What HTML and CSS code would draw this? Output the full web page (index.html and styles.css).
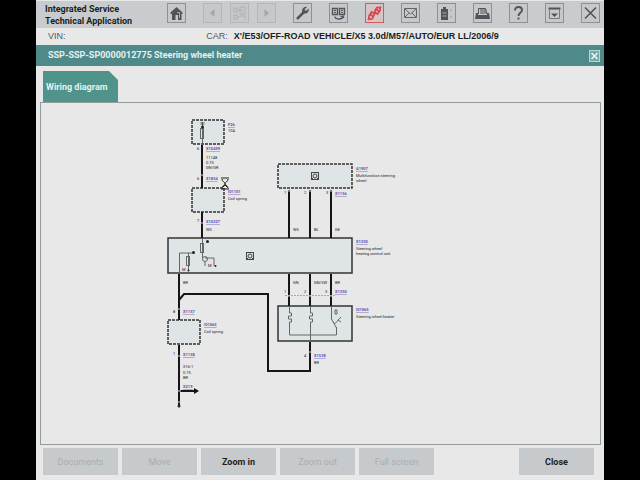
FILE: index.html
```html
<!DOCTYPE html>
<html lang="en">
<head>
<meta charset="utf-8">
<title>Integrated Service Technical Application</title>
<link rel="stylesheet" href="styles.css">
</head>
<body>
<div class="app">
  <header class="topbar">
    <h1 class="brand">Integrated Service<br>Technical Application</h1>
    <nav class="tools" aria-label="Tools">
      <button class="tool" aria-label="Home"><svg viewBox="0 0 17 18"><path d="M2.500 8.500 8.500 3l6 5.500V10H13.500v6H10v-5H7.500v5H4v-6H2.500Z" fill="#505458"/><path d="M9 8.500h3M11.500 9v5" fill="none" stroke="#a9adb0"/></svg></button>
      <div class="history">
        <button class="tool" disabled aria-label="Back"><svg viewBox="0 0 17 18"><path d="M10.500 5v8L6 9z" fill="#a4a8ab"/></svg></button>
        <button class="tool" disabled aria-label="Overview"><svg viewBox="0 0 17 18"><path d="M3 4h3v4H3zM9 3h5v7H9zM9 12h5v3M3 11h3v4H3zM6 6h3M6 13h3M11 5v3" fill="none" stroke="#adb1b4"/></svg></button>
        <button class="tool" disabled aria-label="Forward"><svg viewBox="0 0 17 18"><path d="M6.500 5v8L11 9z" fill="#a4a8ab"/></svg></button>
      </div>
      <button class="tool" aria-label="Settings"><svg viewBox="0 0 17 18"><path d="m3 15 7-7" stroke="#505458" stroke-width="2.500"/><path d="M13 3 10.500 5.500 12 7l2.500-2.500c1 3-1.500 5.500-4 5L8 7.500C8 4.500 10 2 13 3Z" fill="#505458"/></svg></button>
      <button class="tool" aria-label="Vehicle connection"><svg viewBox="0 0 17 18"><path d="M2.500 4.500h5v6h-5zM9.500 4.500h5v6h-5z" fill="#bfc3c6" stroke="#505458" stroke-width="1.300"/><path d="M4 6.500h2M4 8.500h2M11 6.500h2M11 8.500h2" stroke="#505458"/><path d="M5 12.500c0 3 7 3.500 8 .5m-2.500 0 2.500-1 1 2" fill="none" stroke="#505458" stroke-width="1.300"/></svg></button>
      <button class="tool alert" aria-label="Disconnected"><svg viewBox="0 0 17 18" fill="none" stroke="#d8484a" stroke-width="1.700"><path d="m8.500 8 2-4c1.500-1.500 4.500 0 3.500 2.500L11.500 10zM8.500 10l-2 4.500C5 16 2 14.500 3 12l2.500-4zM10 5l3 2.500M4.500 10.500l3 2.500M14 4l1-1.500M3 14.500l-1 1.500"/></svg></button>
      <button class="tool" aria-label="Messages"><svg viewBox="0 0 17 18" fill="none" stroke="#62666a"><path d="M2.500 4.500h12v9h-12zM3 5l5.500 5L14 5M3 13l4-4M14 13l-4-4"/></svg></button>
      <button class="tool" aria-label="Battery"><svg viewBox="0 0 17 18"><path d="M5 3h3v2h2v11H3V5h2z" fill="#505458"/><path d="M4.500 9h4M4.500 12h4" stroke="#aeb2b5"/><path d="M12 6h2M12 13h2" stroke="#9a9ea1"/></svg></button>
      <button class="tool" aria-label="Print"><svg viewBox="0 0 17 18"><path d="M4.500 10V4.500h7L13 10" fill="#c5c9cc" stroke="#505458"/><path d="M7 5v5M9 5v5M11 5v5" stroke="#505458"/><path d="M2 9h2v2h9V9h2l1 6H1z" fill="#505458"/></svg></button>
      <button class="tool" aria-label="Help"><svg viewBox="0 0 17 18"><path d="M5 6.500c0-5 7-4 7-.5 0 3-3.500 2.500-3.500 6" fill="none" stroke="#505458" stroke-width="1.900"/><path d="M7.500 13.500h2v2h-2z" fill="#505458"/></svg></button>
      <button class="tool" aria-label="Minimize"><svg viewBox="0 0 17 18"><path d="M2.500 4.500h12" stroke="#505458" stroke-width="2"/><path d="M3.500 5v9.500h10V5" fill="none" stroke="#777b7e"/><path d="M5 9.500h7L8.500 13z" fill="#505458"/></svg></button>
      <button class="tool" aria-label="Exit"><svg viewBox="0 0 17 18"><path d="m3 3.500 11 11M14 3.500l-11 11" stroke="#505458" stroke-width="1.600"/></svg></button>
    </nav>
  </header>

  <div class="vehicle">
    <span class="vin">VIN:</span>
    <span class="car">CAR:</span>
    <strong>X'/E53/OFF-ROAD VEHICLE/X5 3.0d/M57/AUTO/EUR LL/2006/9</strong>
  </div>

  <div class="titlebar">
    <h2>SSP-SSP-SP0000012775 Steering wheel heater</h2>
    <button class="dismiss" aria-label="Close document"><svg viewBox="0 0 9 10"><path d="m1.500 2 6 6M7.500 2l-6 6" stroke="#e4f2f1" stroke-width="1.700"/></svg></button>
  </div>

  <main class="content">
    <button class="tab">Wiring diagram</button>
    <section class="panel">
      <svg class="diagram" viewBox="41 103 559 341" role="img" aria-label="Steering wheel heater wiring diagram">
        <g class="box dashed">
          <rect x="192" y="120" width="32" height="24"/>
          <rect x="192" y="188" width="32" height="24"/>
          <rect x="278" y="164" width="74" height="24"/>
          <rect x="168" y="320" width="32" height="24"/>
        </g>
        <g class="box">
          <rect x="168" y="238" width="184" height="35"/>
          <rect x="278" y="306" width="74" height="35"/>
        </g>
        <g class="wire">
          <path d="M202 145v43M202 212v26M289 190v48M310 190v48M331 190v48"/>
          <path d="M289 274v32M310 274v32M331 274v32M310 342v29H268V294H184l-5 6"/>
          <path d="M179 274v46M179 345v61M179 391h16"/>
        </g>
        <path d="M194 388l5 3-5 3z" fill="#111"/>
        <g class="gap"><path d="M200 175h4M200 223h4M177 309h4M177 356h4M177 391h4M287 296h4M308 296h4M329 296h4M308 352h4M287 191h4M308 191h4M329 191h4M177 402h4"/></g>
        <path class="link-line" d="M285 295.500h50"/>
        <g class="thin">
          <path d="M202.500 122v22M179.500 274v-21h13M188.500 253v18M202.500 238v20M205 258h9v8M205 262v4"/>
          <rect x="200.500" y="128.500" width="3" height="10"/>
          <rect x="186.500" y="256.500" width="3" height="9"/>
          <rect x="200.500" y="243.500" width="3" height="9"/>
          <circle cx="205" cy="259" r="2.500"/>
          <path d="M310.500 306v7h2v3h-3v3h3v3h-2v19M289.500 306v7h2v3h-3v3h3v3h-2v13h47v-8M331.500 306v13l5 9M333 322c2 3 4 0 5-2m0 0 3 2m-3-2 3-3M335 310h2v4h-2z"/>
        </g>
        <g fill="#222">
          <circle cx="202.500" cy="127" r="1.500"/><circle cx="193.500" cy="252.500" r="1.500"/>
          <circle cx="207.500" cy="241.500" r="1.500"/><circle cx="188.500" cy="270.500" r="1"/>
          <circle cx="215.500" cy="266" r="1"/><circle cx="179" cy="406" r="1.500"/>
        </g>
        <g class="chip">
          <rect x="311.500" y="172.500" width="7" height="7"/><circle cx="315" cy="176" r="2"/><path d="m311 180 2-2M319 180l-2-2"/>
          <rect x="246.500" y="252.500" width="7" height="7"/><circle cx="250" cy="256" r="2"/><path d="m246 260 2-2M254 260l-2-2"/>
        </g>
        <path class="hourglass" d="M221 178h8M221 189h8M222 179c0 3 3 3 3 4.500s-3 2-3 5M228 179c0 3-3 3-3 4.500s3 2 3 5M223 187l2-2 2 2"/>
        <g class="ref">
          <text x="228" y="126">F26</text><text x="206" y="150">X10459</text><text x="206" y="180">X1854</text>
          <text x="228" y="193">I01101</text><text x="206" y="223">X10227</text><text x="356" y="170">A1907</text>
          <text x="335" y="195">X1156</text><text x="356" y="243">X1350</text><text x="335" y="293">X1350</text>
          <text x="356" y="311">I01065</text><text x="314" y="357">X1538</text><text x="183" y="313">X1157</text>
          <text x="204" y="326">I01065</text><text x="183" y="356">X1158</text><text x="183" y="388">X219</text>
        </g>
        <g class="note">
          <text x="228" y="132">10A</text><text x="200" y="125">30</text>
          <text x="206" y="159">11148</text><text x="206" y="164">0.75</text><text x="206" y="169">GN/GR</text>
          <text x="228" y="200">Coil spring</text><text x="206" y="231">WS</text>
          <text x="197" y="150">6</text><text x="197" y="180">6</text><text x="197" y="222">7</text>
          <text x="356" y="177">Multifunction steering</text><text x="356" y="182">wheel</text>
          <text x="284" y="194">1</text><text x="304" y="194">2</text><text x="326" y="194">3</text>
          <text x="293" y="231">WS</text><text x="314" y="231">BL</text><text x="335" y="231">GE</text>
          <text x="356" y="250">Steering wheel</text><text x="356" y="255">heating control unit</text>
          <text x="182" y="271">M</text><text x="208" y="267">M</text><text x="183" y="284">BR</text>
          <text x="293" y="284">GN</text><text x="314" y="284">GN/SW</text><text x="335" y="284">BR</text>
          <text x="284" y="293">1</text><text x="304" y="293">2</text><text x="325" y="293">3</text>
          <text x="356" y="318">Steering wheel heater</text><text x="304" y="357">4</text><text x="314" y="364">BR</text>
          <text x="173" y="313">8</text><text x="204" y="333">Coil spring</text><text x="173" y="355">1</text>
          <text x="183" y="368">X16-1</text><text x="183" y="374">0.75</text><text x="183" y="379">BR</text>
        </g>
      </svg>
    </section>
  </main>

  <footer class="actions">
    <button class="action" disabled>Documents</button>
    <button class="action" disabled>Move</button>
    <button class="action">Zoom in</button>
    <button class="action" disabled>Zoom out</button>
    <button class="action" disabled>Full screen</button>
    <button class="action close">Close</button>
  </footer>
</div>
</body>
</html>
```
FILE: styles.css
```css
* { box-sizing: border-box; }
body {
  margin: 0;
  background: #000;
  font-family: Roboto, "Liberation Sans", sans-serif;
  font-size: 9px;
  color: #1c1e20;
}
button { margin: 0; padding: 0; border: 0; font: inherit; color: inherit; }
svg { display: block; }

.app {
  display: flex;
  flex-direction: column;
  min-height: 100vh;
  margin: 0 36px;
  background: #e8e8e8;
}
.topbar {
  display: flex;
  align-items: flex-start;
  justify-content: space-between;
  padding: 2px 4px 1px 9px;
  border-top: 1px solid #e8e8e8;
  background: #c9cccf;
}
.brand { margin: 0; font-size: 9px; line-height: 12px; font-weight: 700; }
.tools { display: flex; gap: 17px; }
.history { display: flex; gap: 8px; }
.tool {
  width: 19px;
  height: 20px;
  border: 1px solid #8d9194;
  background: #c5c9cc;
}
.tool svg { width: 17px; height: 18px; }
.tool:disabled { border-color: #b3b7ba; }
.tool.alert { border-color: #d8595b; background: #d5c5c7; }

.vehicle {
  display: flex;
  align-items: center;
  padding: 0 12px;
  font-family: "Liberation Sans", sans-serif;
  line-height: 17px;
}
.vin { flex: 0 0 28%; margin-right: 6px; color: #55585a; }
.car { margin-right: 6px; color: #55585a; }

.titlebar {
  display: flex;
  align-items: center;
  justify-content: space-between;
  padding: 0 4px 0 12px;
  background: #50898a;
  color: #e4f2f1;
}
.titlebar h2 { margin: 0; font-size: 9px; line-height: 21px; font-weight: 700; }
.dismiss { width: 11px; height: 12px; border: 1px solid #b9d5d4; background: #76a7a6; }

.content {
  flex: 1;
  display: flex;
  flex-direction: column;
  align-items: flex-start;
  padding: 5px 3px 0 4px;
}
.tab {
  margin-left: 3px;
  width: 75px;
  height: 31px;
  padding-left: 3px;
  background: #50938a;
  clip-path: polygon(0 0, 66px 0, 100% 9px, 100% 100%, 0 100%);
  color: #e4f2f1;
  font-weight: 700;
  text-align: left;
}
.panel { align-self: stretch; flex: 1; border: 1px solid #929c9a; }

.actions {
  display: flex;
  gap: 4px;
  padding: 3px 10px 5px 7px;
}
.action {
  flex: 0 1 75px;
  height: 27px;
  background: #c6cacc;
  font-weight: 700;
}
.action:disabled { color: #a9adaf; font-weight: 400; }
.action.close { margin-left: auto; }

.diagram { width: 100%; }
.box rect { fill: #dfe4e6; stroke: #333; stroke-width: 1.500px; }
.box.dashed rect { stroke-dasharray: 3 1; }
.wire path { fill: none; stroke: #161616; stroke-width: 2px; }
.gap path { stroke: #d5d5d5; stroke-width: 1px; }
.link-line { stroke: #aaa; stroke-width: 1px; stroke-dasharray: 2 1; }
.thin path, .thin rect, .thin circle { fill: none; stroke: #666; stroke-width: 1px; }
.chip rect, .chip circle, .chip path { fill: none; stroke: #444; stroke-width: 1px; }
.hourglass { fill: none; stroke: #222; stroke-width: 1px; }
.ref text { font-size: 4px; fill: #5a52b0; font-weight: 700; text-decoration: underline; }
.note text { font-size: 4px; fill: #222; }
```
